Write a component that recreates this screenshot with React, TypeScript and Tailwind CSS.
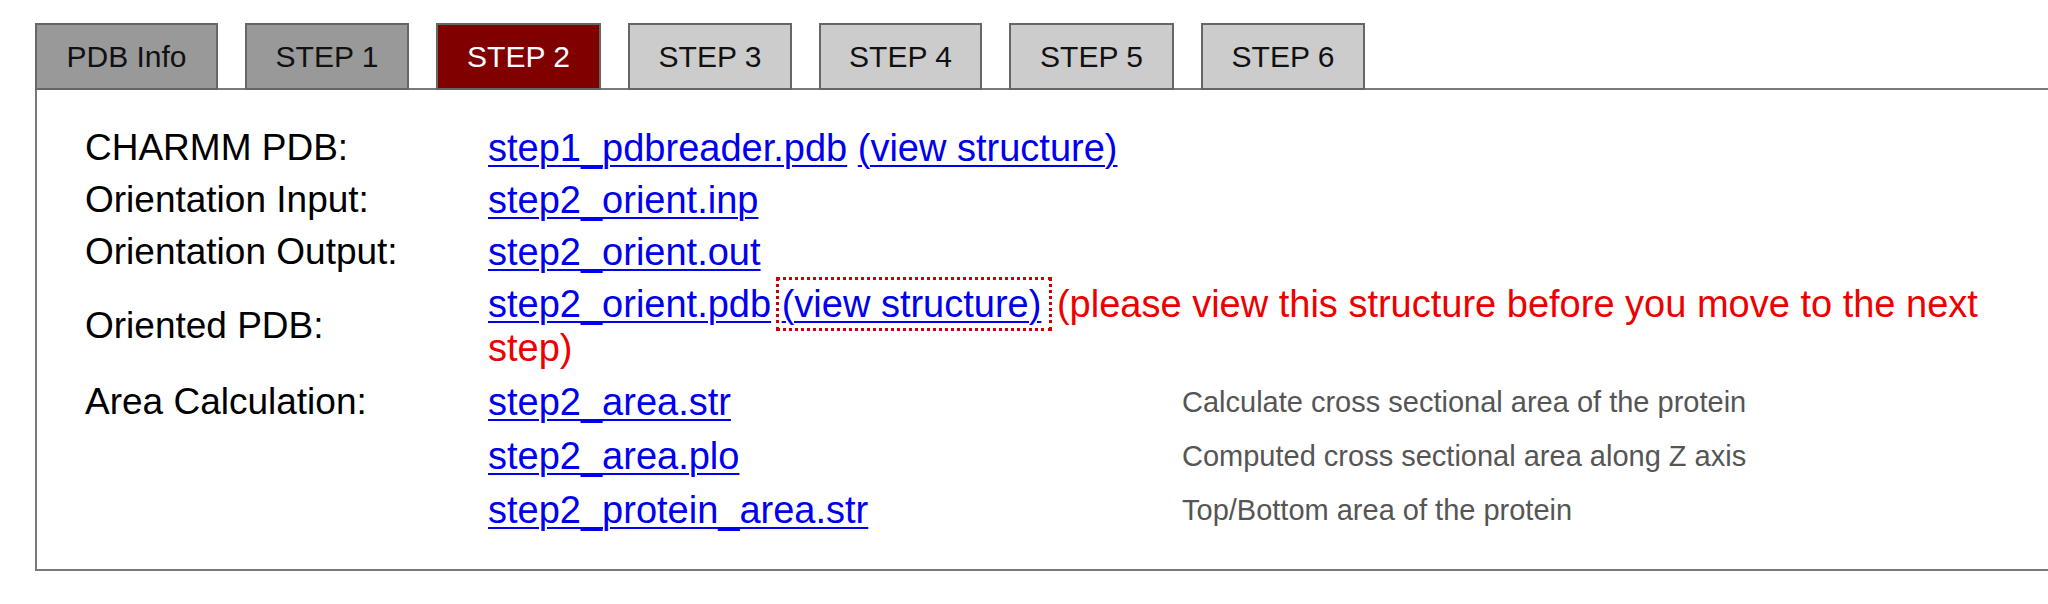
import React from "react";

const tabs = [
  { label: "PDB Info", tone: "done", width: "w-[183px]" },
  { label: "STEP 1", tone: "done", width: "w-[164px]" },
  { label: "STEP 2", tone: "active", width: "w-[165px]" },
  { label: "STEP 3", tone: "todo", width: "w-[164px]" },
  { label: "STEP 4", tone: "todo", width: "w-[163px]" },
  { label: "STEP 5", tone: "todo", width: "w-[165px]" },
  { label: "STEP 6", tone: "todo", width: "w-[164px]" },
];

const toneClass: Record<string, string> = {
  done: "bg-[#999999] text-[#111111]",
  active: "bg-[#800000] text-white",
  todo: "bg-[#cccccc] text-[#111111]",
};

const areaFiles = [
  { file: "step2_area.str", note: "Calculate cross sectional area of the protein" },
  { file: "step2_area.plo", note: "Computed cross sectional area along Z axis" },
  { file: "step2_protein_area.str", note: "Top/Bottom area of the protein" },
];

function FileLink({ children, focused }: { children: React.ReactNode; focused?: boolean }) {
  return (
    <a
      href="#"
      className={
        "text-[#0000ee] underline decoration-[2px] underline-offset-[4px] " +
        (focused ? "pr-[5px] outline-[3px] outline-dotted outline-[#cc0000] outline-offset-[3px]" : "")
      }
    >
      {children}
    </a>
  );
}

function Row({ label, children, center }: { label: string; children: React.ReactNode; center?: boolean }) {
  return (
    <div className={"flex py-[4px] " + (center ? "items-center" : "")}>
      <div className="w-[403px] shrink-0 text-[37px]">{label}</div>
      <div className="text-[38px]">{children}</div>
    </div>
  );
}

export default function App() {
  return (
    <div className="w-[2048px] h-[604px] bg-white pl-[35px] pt-[23px] font-['Liberation_Sans',Arial,sans-serif]">
      <div className="relative z-10 flex gap-[27px]">
        {tabs.map((t) => (
          <div
            key={t.label}
            className={
              "h-[67px] flex items-center justify-center border-2 border-[#666666] text-[30px] " +
              t.width +
              " " +
              toneClass[t.tone]
            }
          >
            {t.label}
          </div>
        ))}
      </div>

      <div className="-mt-[2px] h-[483px] border-2 border-r-0 border-[#7a7a7a] pl-[48px] pt-[32px] leading-[44px] text-black">
        <Row label="CHARMM PDB:">
          <FileLink>step1_pdbreader.pdb</FileLink> <FileLink>(view structure)</FileLink>
        </Row>
        <Row label="Orientation Input:">
          <FileLink>step2_orient.inp</FileLink>
        </Row>
        <Row label="Orientation Output:">
          <FileLink>step2_orient.out</FileLink>
        </Row>
        <Row label="Oriented PDB:" center>
          <div className="flex flex-col">
            <div className="whitespace-nowrap">
              <FileLink>step2_orient.pdb</FileLink> <FileLink focused>(view structure)</FileLink>{" "}
              <span className="text-[#ee0000]">(please view this structure before you move to the next</span>
            </div>
            <span className="text-[#ee0000]">step)</span>
          </div>
        </Row>

        <div className="flex pt-[6px]">
          <div className="w-[403px] shrink-0 text-[37px]">Area Calculation:</div>
          <div className="flex flex-col gap-[10px]">
            {areaFiles.map((a) => (
              <div key={a.file} className="flex items-center">
                <div className="w-[694px] shrink-0 text-[38px]">
                  <FileLink>{a.file}</FileLink>
                </div>
                <div className="text-[29px] text-[#555555]">{a.note}</div>
              </div>
            ))}
          </div>
        </div>
      </div>
    </div>
  );
}
